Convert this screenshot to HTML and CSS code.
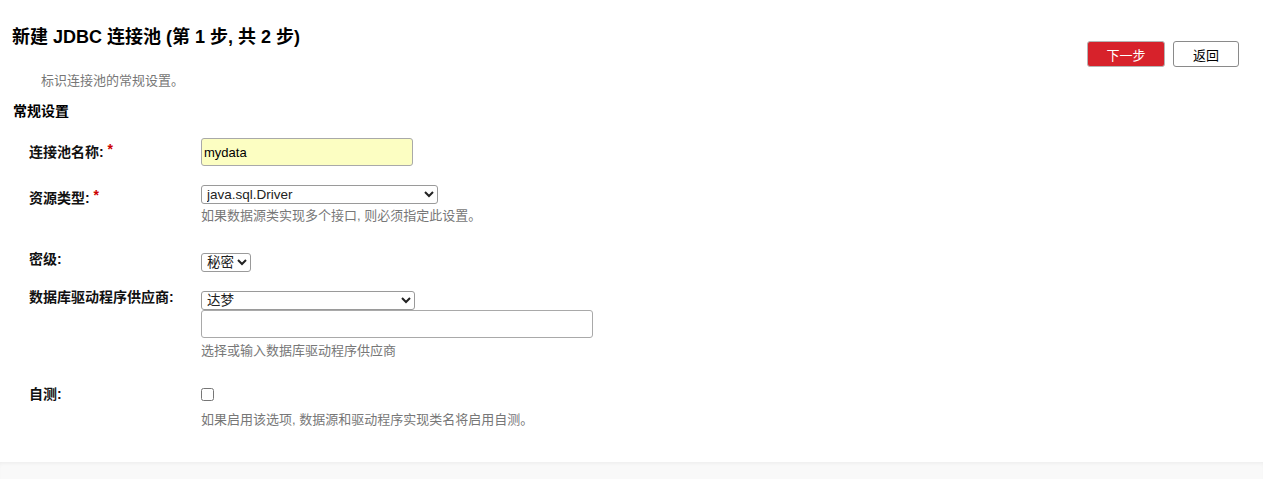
FILE: index.html
```html
<!DOCTYPE html>
<html lang="zh-CN">
<head>
<meta charset="utf-8">
<title>新建 JDBC 连接池</title>
<link rel="stylesheet" href="styles.css">
</head>
<body>
<div class="page">
  <header class="head">
    <div class="head-text">
      <h1 class="title">新建 JDBC 连接池 (第 1 步, 共 2 步)</h1>
      <p class="intro">标识连接池的常规设置。</p>
    </div>
    <div class="actions">
      <button class="btn btn-primary" type="button">下一步</button>
      <button class="btn btn-plain" type="button">返回</button>
    </div>
  </header>
  <h2 class="section">常规设置</h2>
  <div class="form">
    <div class="row row-name">
      <label class="lbl">连接池名称: <span class="req">*</span></label>
      <div class="field">
        <input class="text text-name" type="text" value="mydata">
      </div>
    </div>
    <div class="row row-type">
      <label class="lbl">资源类型: <span class="req">*</span></label>
      <div class="field">
        <select class="sel sel-type"><option>java.sql.Driver</option></select>
        <p class="help">如果数据源类实现多个接口, 则必须指定此设置。</p>
      </div>
    </div>
    <div class="row row-level">
      <label class="lbl">密级:</label>
      <div class="field">
        <select class="sel sel-level"><option>秘密</option></select>
      </div>
    </div>
    <div class="row row-vendor">
      <label class="lbl">数据库驱动程序供应商:</label>
      <div class="field">
        <select class="sel sel-vendor"><option>达梦</option></select>
        <input class="text text-vendor" type="text" value="">
        <p class="help">选择或输入数据库驱动程序供应商</p>
      </div>
    </div>
    <div class="row row-test">
      <label class="lbl">自测:</label>
      <div class="field">
        <input class="check" type="checkbox">
        <p class="help help-test">如果启用该选项, 数据源和驱动程序实现类名将启用自测。</p>
      </div>
    </div>
  </div>
</div>
<footer class="foot"></footer>
</body>
</html>
```

FILE: styles.css
```css
* { box-sizing: border-box; }
html, body { margin: 0; padding: 0; }
body {
  font-family: "Liberation Sans", Arial, "Noto Sans CJK SC", sans-serif;
  color: #000;
  background: #f9f9f9;
  height: 479px;
  overflow: hidden;
}
.page {
  background: #fff;
  height: 462px;
}
.head {
  display: flex;
  justify-content: space-between;
  align-items: flex-start;
  padding: 26px 24px 0 12px;
}
.title {
  margin: 0;
  font-size: 18px;
  line-height: 22px;
  font-weight: bold;
}
.intro {
  margin: 25px 0 0 29px;
  font-size: 13px;
  line-height: 16px;
  color: #777;
}
.actions {
  display: flex;
  gap: 8px;
  margin-top: 15px;
}
.btn {
  height: 26px;
  font-family: "Liberation Sans", "Noto Sans CJK SC", sans-serif;
  font-size: 13px;
  border-radius: 3px;
  padding: 0;
  cursor: pointer;
}
.btn-primary {
  width: 78px;
  background: #d7222b;
  color: #fff;
  border: 1px solid #b5b5b5;
}
.btn-plain {
  width: 66px;
  background: #fff;
  color: #000;
  border: 1px solid #8a8a8a;
}
.section {
  margin: 13px 0 0 13px;
  font-size: 14px;
  line-height: 18px;
  font-weight: bold;
}
.form {
  margin-top: 18px;
  padding-left: 29px;
  display: flex;
  flex-direction: column;
  gap: 19px;
}
.row {
  display: flex;
  align-items: flex-start;
}
.lbl {
  width: 172px;
  flex: none;
  font-size: 14px;
  line-height: 16px;
  font-weight: bold;
  color: #111;
}
.req {
  color: #c00;
  font-size: 14px;
  vertical-align: 3px;
}
.row-name .lbl { padding-top: 3px; }
.row-type .lbl { padding-top: 2px; }
.row-level .lbl { margin-top: -2px; }
.row-vendor .lbl { margin-top: -2px; }
.row-test .lbl { margin-top: -2px; }
.field {
  display: flex;
  flex-direction: column;
  align-items: flex-start;
}
.text {
  height: 28px;
  border: 1px solid #a9a9a9;
  border-radius: 3px;
  font-family: "Liberation Sans", "Noto Sans CJK SC", sans-serif;
  font-size: 13px;
  padding: 0 2px;
  color: #000;
  background: #fff;
}
.text-name {
  width: 212px;
  background: #fcfec2;
}
.text-vendor {
  width: 392px;
}
.sel {
  height: 19px;
  font-family: "Liberation Sans", "Noto Sans CJK SC", sans-serif;
  font-size: 13.5px;
  padding: 0 0 0 1px;
  margin: 0;
  color: #222;
  background: #fff;
  border: 1px solid #9a9a9a;
  border-radius: 3px;
}
.sel-type { width: 237px; }
.sel-level { width: 50px; }
.sel-vendor { width: 214px; }
.help {
  margin: 4px 0 10px 0;
  font-size: 13px;
  line-height: 16px;
  color: #777;
}
.row-vendor .help { margin-top: 5px; }
.check {
  width: 13px;
  height: 13px;
  margin: 0;
}
.help-test { margin-top: 11px; }
.foot {
  height: 17px;
  background: #f9f9f9;
  box-shadow: inset 0 3px 4px -2px rgba(0,0,0,0.06);
}
```
